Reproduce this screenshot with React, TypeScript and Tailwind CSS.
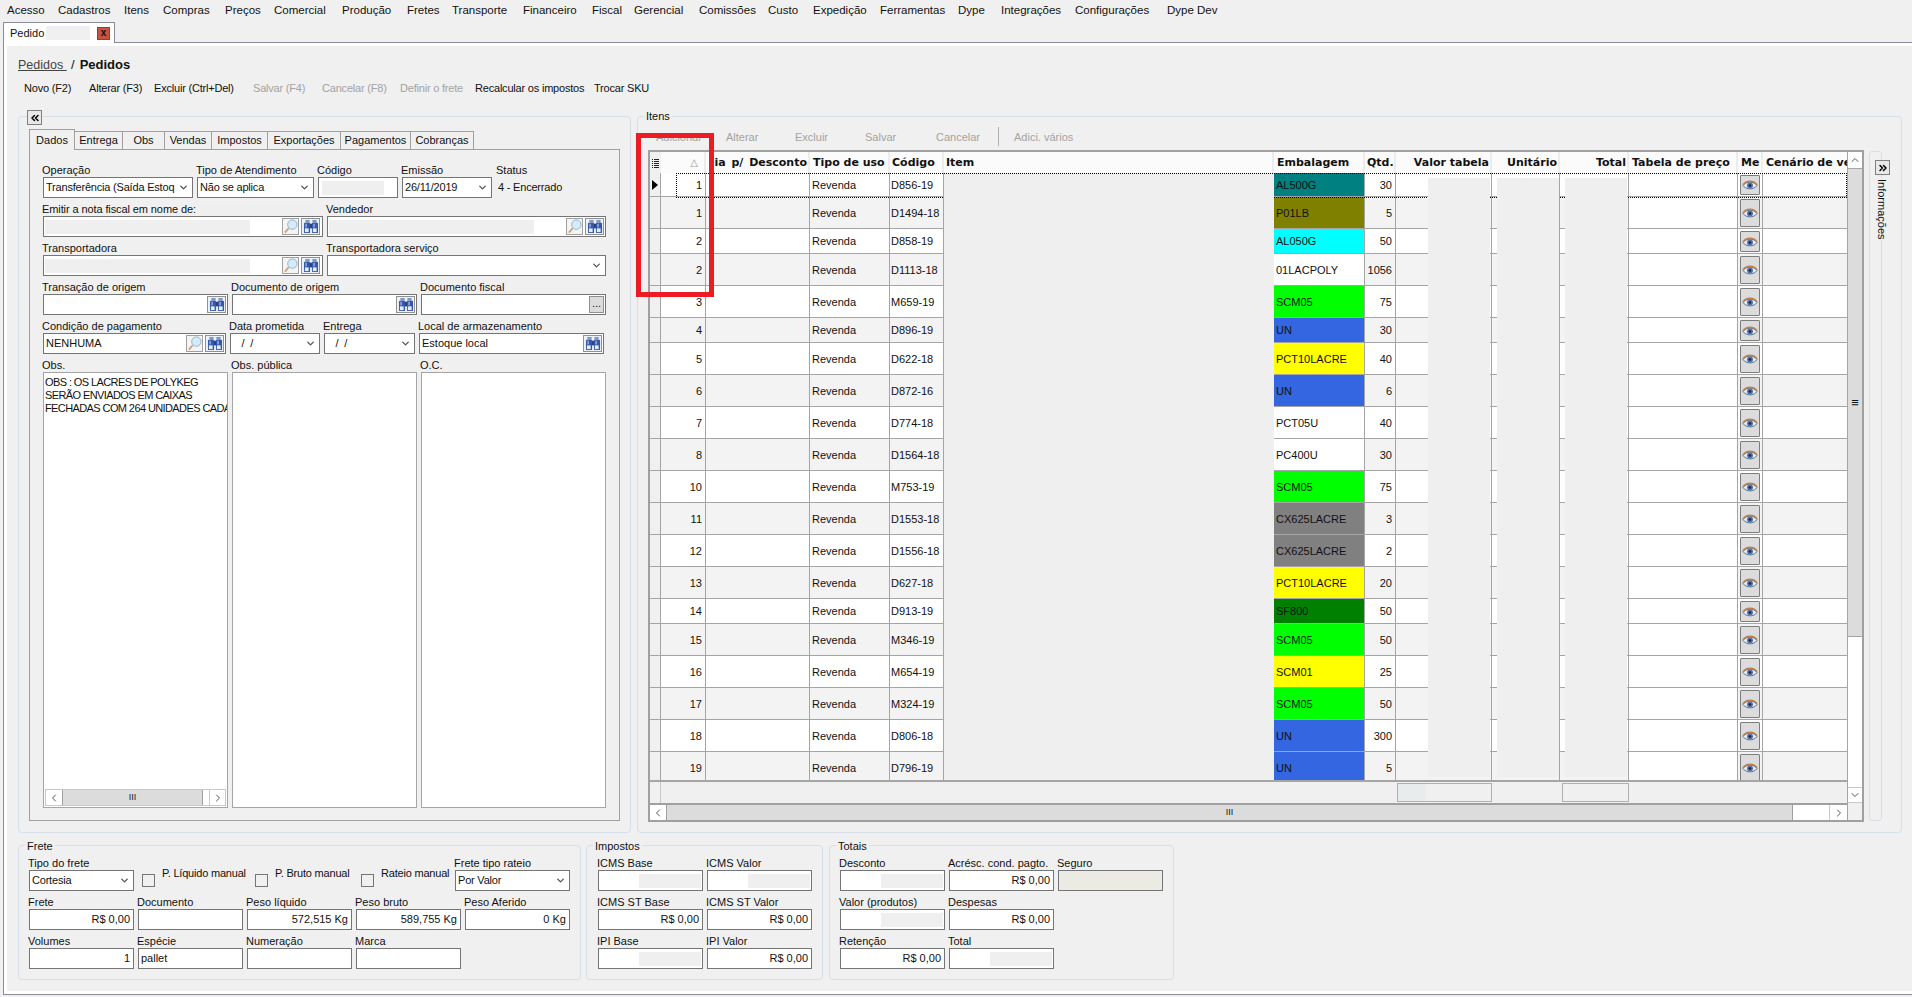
import React from 'react';
import { ChevronDown, ChevronLeft, ChevronRight, ChevronUp, ChevronsLeft, ChevronsRight } from 'lucide-react';

const menu = [
  { t: 'Acesso', w: 'w-[51px]' }, { t: 'Cadastros', w: 'w-[66px]' }, { t: 'Itens', w: 'w-[39px]' },
  { t: 'Compras', w: 'w-[62px]' }, { t: 'Preços', w: 'w-[49px]' }, { t: 'Comercial', w: 'w-[68px]' },
  { t: 'Produção', w: 'w-[65px]' }, { t: 'Fretes', w: 'w-[45px]' }, { t: 'Transporte', w: 'w-[71px]' },
  { t: 'Financeiro', w: 'w-[69px]' }, { t: 'Fiscal', w: 'w-[42px]' }, { t: 'Gerencial', w: 'w-[65px]' },
  { t: 'Comissões', w: 'w-[69px]' }, { t: 'Custo', w: 'w-[45px]' }, { t: 'Expedição', w: 'w-[67px]' },
  { t: 'Ferramentas', w: 'w-[78px]' }, { t: 'Dype', w: 'w-[43px]' }, { t: 'Integrações', w: 'w-[74px]' },
  { t: 'Configurações', w: 'w-[92px]' }, { t: 'Dype Dev', w: 'w-[70px]' },
];

const actions = [
  { t: 'Novo (F2)', w: 'w-[65px]', off: false }, { t: 'Alterar (F3)', w: 'w-[65px]', off: false },
  { t: 'Excluir (Ctrl+Del)', w: 'w-[99px]', off: false }, { t: 'Salvar (F4)', w: 'w-[69px]', off: true },
  { t: 'Cancelar (F8)', w: 'w-[78px]', off: true }, { t: 'Definir o frete', w: 'w-[75px]', off: true },
  { t: 'Recalcular os impostos', w: 'w-[119px]', off: false }, { t: 'Trocar SKU', w: 'w-[70px]', off: false },
];

const tabs = [
  { t: 'Entrega', w: 'w-[48px]' }, { t: 'Obs', w: 'w-[42px]' }, { t: 'Vendas', w: 'w-[47px]' },
  { t: 'Impostos', w: 'w-[56px]' }, { t: 'Exportações', w: 'w-[73px]' }, { t: 'Pagamentos', w: 'w-[70px]' },
  { t: 'Cobranças', w: 'w-[63px]' },
];

const teal = 'bg-[#008080]', olive = 'bg-[#808000]', cyan = 'bg-[#00ffff]', lime = 'bg-[#00ff00]';
const blue = 'bg-[#3366e0]', yellow = 'bg-[#ffff00]', gray = 'bg-[#808080]', green = 'bg-[#008000]';

const rows = [
  { n: '1', c: 'D856-19', e: 'AL500G', bg: teal, q: '30', h: 'h-[24px]' },
  { n: '1', c: 'D1494-18', e: 'P01LB', bg: olive, q: '5', h: 'h-[32px]' },
  { n: '2', c: 'D858-19', e: 'AL050G', bg: cyan, q: '50', h: 'h-[25px]' },
  { n: '2', c: 'D1113-18', e: '01LACPOLY', bg: 'bg-white', q: '1056', h: 'h-[32px]' },
  { n: '3', c: 'M659-19', e: 'SCM05', bg: lime, q: '75', h: 'h-[32px]' },
  { n: '4', c: 'D896-19', e: 'UN', bg: blue, q: '30', h: 'h-[25px]' },
  { n: '5', c: 'D622-18', e: 'PCT10LACRE', bg: yellow, q: '40', h: 'h-[32px]' },
  { n: '6', c: 'D872-16', e: 'UN', bg: blue, q: '6', h: 'h-[32px]' },
  { n: '7', c: 'D774-18', e: 'PCT05U', bg: 'bg-white', q: '40', h: 'h-[32px]' },
  { n: '8', c: 'D1564-18', e: 'PC400U', bg: 'bg-white', q: '30', h: 'h-[32px]' },
  { n: '10', c: 'M753-19', e: 'SCM05', bg: lime, q: '75', h: 'h-[32px]' },
  { n: '11', c: 'D1553-18', e: 'CX625LACRE', bg: gray, q: '3', h: 'h-[32px]' },
  { n: '12', c: 'D1556-18', e: 'CX625LACRE', bg: gray, q: '2', h: 'h-[32px]' },
  { n: '13', c: 'D627-18', e: 'PCT10LACRE', bg: yellow, q: '20', h: 'h-[32px]' },
  { n: '14', c: 'D913-19', e: 'SF800', bg: green, q: '50', h: 'h-[25px]' },
  { n: '15', c: 'M346-19', e: 'SCM05', bg: lime, q: '50', h: 'h-[32px]' },
  { n: '16', c: 'M654-19', e: 'SCM01', bg: yellow, q: '25', h: 'h-[32px]' },
  { n: '17', c: 'M324-19', e: 'SCM05', bg: lime, q: '50', h: 'h-[32px]' },
  { n: '18', c: 'D806-18', e: 'UN', bg: blue, q: '300', h: 'h-[32px]' },
  { n: '19', c: 'D796-19', e: 'UN', bg: blue, q: '5', h: 'h-[32px]' },
];

const columns = 'grid grid-cols-[11px_45px_104px_80px_54px_330px_91px_31px_96px_68px_69px_109px_25px_84px]';

const Binoculars = () => (
  <svg viewBox="0 0 16 16" className="w-[16px] h-[15px]">
    <rect x="2" y="1" width="4.5" height="3" fill="#7f97c9" />
    <rect x="9.5" y="1" width="4.5" height="3" fill="#7f97c9" />
    <rect x="0.5" y="4" width="6.5" height="11" rx="1" fill="#3557a8" />
    <rect x="9" y="4" width="6.5" height="11" rx="1" fill="#3557a8" />
    <rect x="7" y="5" width="2" height="5" fill="#22367c" />
    <rect x="2" y="5" width="1.5" height="4" fill="#9db4e0" />
    <rect x="10.5" y="5" width="1.5" height="4" fill="#9db4e0" />
    <rect x="1.5" y="10" width="4" height="4" fill="#e4edfb" />
    <rect x="10" y="10" width="4" height="4" fill="#e4edfb" />
  </svg>
);

const Magnifier = () => (
  <svg viewBox="0 0 16 16" className="w-[15px] h-[15px]">
    <line x1="6" y1="10" x2="2" y2="14.5" stroke="#c9a47c" strokeWidth="2" />
    <circle cx="10" cy="6" r="5" fill="#d6ebf8" stroke="#8fb0cc" />
  </svg>
);

const Eye = () => (
  <svg viewBox="0 0 16 12" className="w-[16px] h-[12px]">
    <path d="M1 6.5C4 2 12 2 15 6.5C12 11 4 11 1 6.5Z" fill="#e6ecf5" stroke="#5f759c" />
    <path d="M1 6C4 1 12 1 15 6" fill="none" stroke="#c07f4f" strokeWidth="1.5" />
    <circle cx="8" cy="6.5" r="3" fill="#5573a8" />
    <circle cx="8" cy="6.5" r="1.3" fill="#17264a" />
  </svg>
);

const BinButton = () => (
  <span className="w-[19px] h-[17px] shrink-0 flex items-center justify-center border border-[#909090] bg-[#eef1f5]">
    <Binoculars />
  </span>
);

const SearchButton = () => (
  <span className="w-[17px] h-[17px] shrink-0 flex items-center justify-center border border-[#a0a0a0] bg-[#f4f4f4]">
    <Magnifier />
  </span>
);

const Label = ({ children }: { children: React.ReactNode }) => (
  <span className="block h-[14px] leading-[14px] -ml-px whitespace-nowrap">{children}</span>
);

const Box = ({ children, className = 'bg-white' }: { children?: React.ReactNode; className?: string }) => (
  <div className={`h-[21px] border border-[#757575] flex items-center overflow-hidden whitespace-nowrap ${className}`}>
    {children}
  </div>
);

const Field = ({ label, w, children, box }: { label: string; w: string; children?: React.ReactNode; box?: string }) => (
  <div className={`shrink-0 ${w}`}>
    <Label>{label}</Label>
    <Box className={box}>{children}</Box>
  </div>
);

const Select = ({ label, w, value }: { label: string; w: string; value: string }) => (
  <Field label={label} w={w}>
    <span className="flex-1 pl-[2px] overflow-hidden tracking-[-0.2px]">{value}</span>
    <ChevronDown size={11} strokeWidth={3} className="text-[#555555] mr-[3px] shrink-0" />
  </Field>
);

const Money = ({ label, value }: { label: string; value: string }) => (
  <Field label={label} w="w-[105px]">
    <span className="w-full text-right pr-[3px]">{value}</span>
  </Field>
);

const Masked = ({ label, w = 'w-[105px]' }: { label: string; w?: string }) => (
  <Field label={label} w={w}>
    <span className="ml-[40px] w-[62px] h-[14px] bg-[#efefef]" />
  </Field>
);

const Group = ({ legend, w, children }: { legend: string; w: string; children: React.ReactNode }) => (
  <div className={`relative h-[135px] rounded-[4px] border border-[#d5dfe7] ${w}`}>
    <span className="absolute left-[6px] -top-[7px] px-[2px] leading-[14px] bg-[#f0f0f0]">{legend}</span>
    {children}
  </div>
);

const Check = ({ label, w }: { label: string; w: string }) => (
  <div className={`flex shrink-0 ${w}`}>
    <span className="mt-[18px] w-[13px] h-[13px] border border-[#757575]" />
    <span className="mt-[10px] ml-[7px] leading-[14px] whitespace-nowrap tracking-[-0.2px]">{label}</span>
  </div>
);

const noDate = '\u00a0\u00a0\u00a0/\u00a0\u00a0/';

export default function App() {
  return (
    <div className="w-[1912px] h-[997px] overflow-hidden flex flex-col bg-[#f0f0f0] text-[11px] text-[#111111] font-['Liberation_Sans',Arial,sans-serif]">
      {/* menu */}
      <div className="h-[22px] flex pl-[7px] leading-[20px] text-[11.5px] shrink-0">
        {menu.map(m => (
          <span key={m.t} className={`whitespace-nowrap ${m.w}`}>{m.t}</span>
        ))}
      </div>

      {/* document tabs */}
      <div className="h-[21px] flex shrink-0">
        <div className="ml-[3px] w-[112px] flex items-center bg-white border-t border-x border-[#8a8a98]">
          <span className="ml-[6px] w-[36px]">Pedido</span>
          <span className="w-[44px] h-[14px] bg-[#f0f0f0]" />
          <span className="ml-[7px] w-[13px] h-[13px] flex items-center justify-center bg-[#c5533f] border border-[#7a4a40] font-bold text-[10px] leading-none">x</span>
        </div>
        <div className="flex-1 border-b border-[#8a8a98]" />
      </div>

      {/* page */}
      <div className="ml-[3px] h-[952px] shrink-0 bg-white border-l border-b border-[#8a8a98] pt-[3px] pl-[3px] pb-[3px]">
        <div className="h-full bg-[#f0f0f0] pl-[11px] pt-[11px]">
          <div className="h-[16px] flex items-center whitespace-nowrap">
            <span className="text-[12.5px] underline text-[#444444] w-[52px]">Pedidos&nbsp;</span>
            <span className="text-[13px] ml-[1px]">/</span>
            <span className="text-[13px] font-bold ml-[5px]">Pedidos</span>
          </div>

          <div className="h-[16px] mt-[7px] flex items-center pl-[6px] tracking-[-0.2px]">
            {actions.map(a => (
              <span key={a.t} className={`whitespace-nowrap ${a.w} ${a.off ? 'text-[#a3a3a3]' : ''}`}>{a.t}</span>
            ))}
          </div>

          <div className="mt-[20px] h-[717px] flex gap-[6px]">
            {/* left panel */}
            <div className="relative w-[613px] rounded-[4px] border border-[#d5dfe7] pl-[10px] pt-[12px]">
              <span className="absolute left-[8px] -top-[7px] w-[15px] h-[15px] flex items-center justify-center border border-[#808080] bg-[#e8e8e8]">
                <ChevronsLeft size={12} strokeWidth={3} className="text-black" />
              </span>

              <div className="h-[20px] flex items-end">
                <span className="relative z-10 -mb-px w-[46px] h-[21px] flex items-center justify-center bg-[#f0f0f0] border-t border-x border-[#a0a0a0]">Dados</span>
                {tabs.map(t => (
                  <span key={t.t} className={`h-[18px] flex items-center justify-center border-t border-r border-[#a0a0a0] ${t.w}`}>{t.t}</span>
                ))}
              </div>

              <div className="w-[591px] h-[672px] border border-[#a0a0a0] pl-[13px] pt-[13px] flex flex-col gap-[4px]">
                <div className="flex gap-[4px]">
                  <Select label="Operação" w="w-[150px]" value="Transferência (Saída Estoq" />
                  <Select label="Tipo de Atendimento" w="w-[117px]" value="Não se aplica" />
                  <Field label="Código" w="w-[80px]">
                    <span className="ml-[3px] w-[62px] h-[14px] bg-[#efefef]" />
                  </Field>
                  <Select label="Emissão" w="w-[90px]" value="26/11/2019" />
                  <div className="ml-px">
                    <Label>Status</Label>
                    <span className="block mt-[2px] ml-[1px] tracking-[-0.2px]">4 - Encerrado</span>
                  </div>
                </div>

                <div className="flex gap-[4px]">
                  <div className="w-[280px]">
                    <div className="flex h-[14px] items-center -ml-px whitespace-nowrap tracking-[-0.1px]">
                      Emitir a nota fiscal em nome de:
                      <span className="ml-[4px] w-[114px] h-[12px] bg-[#efefef]" />
                    </div>
                    <Box>
                      <span className="ml-[1px] w-[205px] h-[14px] bg-[#efefef]" />
                      <span className="ml-auto flex gap-[2px] pr-[2px]"><SearchButton /><BinButton /></span>
                    </Box>
                  </div>
                  <Field label="Vendedor" w="w-[279px]">
                    <span className="ml-[1px] w-[205px] h-[14px] bg-[#efefef]" />
                    <span className="ml-auto flex gap-[2px] pr-[1px]"><SearchButton /><BinButton /></span>
                  </Field>
                </div>

                <div className="flex gap-[4px]">
                  <Field label="Transportadora" w="w-[280px]">
                    <span className="ml-[1px] w-[205px] h-[14px] bg-[#efefef]" />
                    <span className="ml-auto flex gap-[2px] pr-[2px]"><SearchButton /><BinButton /></span>
                  </Field>
                  <Select label="Transportadora serviço" w="w-[279px]" value="" />
                </div>

                <div className="flex gap-[4px]">
                  <Field label="Transação de origem" w="w-[185px]">
                    <span className="ml-auto pr-[1px]"><BinButton /></span>
                  </Field>
                  <Field label="Documento de origem" w="w-[185px]">
                    <span className="ml-auto pr-[1px]"><BinButton /></span>
                  </Field>
                  <Field label="Documento fiscal" w="w-[185px]">
                    <span className="ml-auto mr-[1px] w-[15px] h-[17px] flex items-center justify-center border border-[#909090] bg-[#dcdcdc] leading-none pb-[3px]">...</span>
                  </Field>
                </div>

                <div className="flex gap-[4px]">
                  <Field label="Condição de pagamento" w="w-[183px]">
                    <span className="pl-[2px]">NENHUMA</span>
                    <span className="ml-auto flex gap-[2px] pr-[1px]"><SearchButton /><BinButton /></span>
                  </Field>
                  <Select label="Data prometida" w="w-[90px]" value={noDate} />
                  <Select label="Entrega" w="w-[91px]" value={noDate} />
                  <Field label="Local de armazenamento" w="w-[185px]">
                    <span className="pl-[2px]">Estoque local</span>
                    <span className="ml-auto pr-[1px]"><BinButton /></span>
                  </Field>
                </div>

                <div className="flex gap-[4px]">
                  <div className="w-[185px]">
                    <Label>Obs.</Label>
                    <div className="h-[436px] bg-white border border-[#a5a5a5] flex flex-col overflow-hidden">
                      <div className="flex-1 pl-[1px] pt-[3px] leading-[13px] whitespace-nowrap overflow-hidden tracking-[-0.6px]">
                        <div>OBS : OS LACRES DE POLYKEG</div>
                        <div>SERÃO ENVIADOS EM CAIXAS</div>
                        <div>FECHADAS COM 264 UNIDADES CADA</div>
                      </div>
                      <div className="h-[17px] mx-[1px] mb-[1px] flex border border-[#c8c8c8]">
                        <span className="w-[16px] flex items-center justify-center"><ChevronLeft size={12} className="text-[#555555]" /></span>
                        <span className="w-[141px] flex items-center justify-center bg-[#dcdcdc] border-x border-[#a0a0a0] text-[9px]">III</span>
                        <span className="w-[6px]" />
                        <span className="flex-1 flex items-center justify-center border-l border-[#c8c8c8]"><ChevronRight size={12} className="text-[#555555]" /></span>
                      </div>
                    </div>
                  </div>
                  <div className="w-[185px]">
                    <Label>Obs. pública</Label>
                    <div className="h-[436px] bg-white border border-[#a5a5a5]" />
                  </div>
                  <div className="w-[185px]">
                    <Label>O.C.</Label>
                    <div className="h-[436px] bg-white border border-[#a5a5a5]" />
                  </div>
                </div>
              </div>
            </div>

            {/* items panel */}
            <div className="relative w-[1265px] rounded-[4px] border border-[#d5dfe7] pl-[10px] pt-[10px]">
              <span className="absolute left-[6px] -top-[8px] px-[2px] leading-[14px] bg-[#f0f0f0]">Itens</span>

              <div className="h-[19px] mb-[4px] flex items-center pl-[8px] text-[#a3a3a3]">
                <span className="w-[70px] mt-[2px]">Adicionar</span>
                <span className="w-[69px] mt-[2px]">Alterar</span>
                <span className="w-[70px] mt-[2px]">Excluir</span>
                <span className="w-[71px] mt-[2px]">Salvar</span>
                <span className="w-[62px] mt-[2px]">Cancelar</span>
                <span className="w-px h-[19px] bg-[#b0b0b0]" />
                <span className="ml-[15px] mt-[2px]">Adici. vários</span>
              </div>

              <div className="flex">
                <div className="relative w-[1216px] h-[672px] border-2 border-[#a0a0a0] flex bg-[#f0f0f0]">
                  <div className="w-[1197px] flex flex-col">
                    <div className={`${columns} h-[21px] bg-[#fbfbfb] font-bold text-[11px] font-['DejaVu_Sans',sans-serif] leading-[21px] whitespace-nowrap`}>
                      <span className="flex items-center justify-center bg-[#f0f0f0]">
                        <svg viewBox="0 0 7 10" className="w-[7px] h-[10px]">
                          <path d="M0 1.5H1M0 3.5H1M0 5.5H1M0 7.5H1M0 9.5H1M2 1.5H7M2 3.5H7M2 5.5H7M2 7.5H7M2 9.5H7" stroke="#222222" />
                        </svg>
                      </span>
                      <span className="flex items-center justify-end pr-[6px] border-r-2 border-[#ececec] font-normal text-[#999999] text-[10px]">△</span>
                      <span className="text-right pr-[1px] border-r-2 border-[#ececec] overflow-hidden [word-spacing:2px]">ia p/ Desconto</span>
                      <span className="pl-[3px] border-r-2 border-[#ececec] overflow-hidden">Tipo de uso</span>
                      <span className="pl-[2px] border-r-2 border-[#ececec] overflow-hidden">Código</span>
                      <span className="pl-[2px] border-r-2 border-[#ececec]">Item</span>
                      <span className="pl-[3px] border-r-2 border-[#ececec] overflow-hidden">Embalagem</span>
                      <span className="pl-[2px] border-r-2 border-[#ececec] overflow-hidden">Qtd.</span>
                      <span className="text-right pr-[1px] border-r-2 border-[#ececec] overflow-hidden">Valor tabela</span>
                      <span className="text-right pr-[1px] border-r-2 border-[#ececec] overflow-hidden">Unitário</span>
                      <span className="text-right pr-[1px] border-r-2 border-[#ececec] overflow-hidden">Total</span>
                      <span className="pl-[3px] border-r-2 border-[#ececec] overflow-hidden">Tabela de preço</span>
                      <span className="pl-[3px] border-r-2 border-[#ececec] overflow-hidden">Me</span>
                      <span className="pl-[3px] overflow-hidden">Cenário de venda</span>
                    </div>

                    <div className="relative h-[607px] overflow-hidden">
                      {rows.map((r, i) => {
                        const stripe = i % 2 === 0 ? 'bg-white' : 'bg-[#f3f3f3]';
                        const cell = `flex items-center border-r border-b border-[#a5a5a5] overflow-hidden whitespace-nowrap ${stripe}`;
                        return (
                          <div key={i} className={`${columns} ${r.h}`}>
                            <span className="flex items-center justify-center border-r border-b border-[#a5a5a5] bg-[#f0f0f0]">
                              {i === 0 && <span className="w-0 h-0 border-y-[5px] border-y-transparent border-l-[6px] border-l-black" />}
                            </span>
                            <span className={`${cell} justify-end pr-[3px] pt-px`}>{r.n}</span>
                            <span className={cell} />
                            <span className={`${cell} pl-[2px] pt-px`}>Revenda</span>
                            <span className={`${cell} pl-[1px] pt-px`}>{r.c}</span>
                            <span className="bg-[#efefef]" />
                            <span className={`flex items-center pl-[2px] pt-px border-r border-b border-[#a5a5a5] whitespace-nowrap ${r.bg}`}>{r.e}</span>
                            <span className={`${cell} justify-end pr-[3px] pt-px`}>{r.q}</span>
                            <span className={cell} />
                            <span className={cell} />
                            <span className={cell} />
                            <span className="border-r border-b border-[#a5a5a5] bg-white" />
                            <span className={`${cell} px-[2px] pb-[1px] pt-[2px]`}>
                              <span className="w-[20px] h-full flex items-center justify-center rounded-[1px] border border-[#7d7d7d] bg-[#dcdcdc]"><Eye /></span>
                            </span>
                            <span className={`flex border-b border-[#a5a5a5] ${stripe}`} />
                          </div>
                        );
                      })}
                      {/* focus rect of the current row, then the masked values over it */}
                      <div className="absolute left-[26px] top-0 w-[1171px] h-[25px] border border-dotted border-black" />
                      <div className="absolute left-[294px] top-[2px] w-[330px] h-[605px] bg-[#efefef]" />
                      <div className="absolute left-[778px] top-[5px] w-[62px] h-[599px] bg-[#efefef]" />
                      <div className="absolute left-[847px] top-[5px] w-[62px] h-[599px] bg-[#efefef]" />
                      <div className="absolute left-[915px] top-[5px] w-[62px] h-[599px] bg-[#efefef]" />
                    </div>

                    <div className="h-[21px] border-t-2 border-[#a5a5a5] box-content flex items-center">
                      <span className="w-[11px] h-full border-r border-[#c8c8c8]" />
                      <span className="ml-[736px] w-[95px] h-[19px] border border-[#b0b0b0] flex">
                        <span className="w-[28px] bg-[#e8ecec]" />
                      </span>
                      <span className="ml-[70px] w-[67px] h-[19px] border border-[#b0b0b0]" />
                    </div>

                    <div className="h-[15px] box-content border-t-2 border-[#a0a0a0] flex">
                      <span className="w-[16px] flex items-center justify-center bg-white"><ChevronLeft size={12} className="text-[#555555]" /></span>
                      <span className="w-[1127px] flex items-center justify-center bg-[#dcdcdc] border-x border-[#a0a0a0] text-[9px]">III</span>
                      <span className="w-[36px] bg-white" />
                      <span className="flex-1 flex items-center justify-center bg-white border-l border-[#c8c8c8]"><ChevronRight size={12} className="text-[#555555]" /></span>
                    </div>
                  </div>

                  <div className="w-[15px] flex flex-col border-l border-[#a5a5a5]">
                    <span className="h-[16px] flex items-center justify-center bg-white"><ChevronUp size={12} className="text-[#555555]" /></span>
                    <span className="h-[469px] flex items-center justify-center bg-[#dcdcdc] border-y border-[#a5a5a5] text-[13px]">≡</span>
                    <span className="h-[150px] bg-white" />
                    <span className="h-[16px] flex items-center justify-center bg-white border-y border-[#c8c8c8]"><ChevronDown size={12} className="text-[#555555]" /></span>
                  </div>

                  {/* annotation drawn on the screenshot */}
                  <div className="absolute -left-[14px] -top-[19px] w-[78px] h-[164px] border-[5px] border-[#ed1c24]" />
                </div>

                <div className="relative ml-[5px] mt-px w-[13px] h-[670px] rounded-[3px] border border-[#d5dfe7]">
                  <span className="absolute left-[5px] top-[8px] w-[15px] h-[15px] flex items-center justify-center border border-[#808080] bg-[#e8e8e8]">
                    <ChevronsRight size={12} strokeWidth={3} className="text-black" />
                  </span>
                  <span className="absolute left-[4px] top-[26px] w-[16px] h-[62px] flex justify-center bg-[#f0f0f0] [writing-mode:vertical-rl] leading-[16px] whitespace-nowrap">Informações</span>
                </div>
              </div>
            </div>
          </div>

          {/* totals */}
          <div className="mt-[12px] flex">
            <Group legend="Frete" w="w-[563px]">
              <div className="pl-[10px] pt-[10px] flex flex-col gap-[4px]">
                <div className="flex">
                  <Select label="Tipo do frete" w="w-[105px]" value="Cortesia" />
                  <div className="ml-[8px] flex">
                    <Check label="P. Líquido manual" w="w-[113px]" />
                    <Check label="P. Bruto manual" w="w-[106px]" />
                    <Check label="Rateio manual" w="w-[94px]" />
                  </div>
                  <Select label="Frete tipo rateio" w="w-[115px]" value="Por Valor" />
                </div>
                <div className="flex gap-[4px]">
                  <Money label="Frete" value="R$ 0,00" />
                  <Field label="Documento" w="w-[105px]" />
                  <Money label="Peso líquido" value="572,515 Kg" />
                  <Money label="Peso bruto" value="589,755 Kg" />
                  <Money label="Peso Aferido" value="0 Kg" />
                </div>
                <div className="flex gap-[4px]">
                  <Money label="Volumes" value="1" />
                  <Field label="Espécie" w="w-[105px]"><span className="pl-[2px]">pallet</span></Field>
                  <Field label="Numeração" w="w-[105px]" />
                  <Field label="Marca" w="w-[105px]" />
                </div>
              </div>
            </Group>

            <div className="ml-[5px]">
              <Group legend="Impostos" w="w-[237px]">
                <div className="pl-[11px] pt-[10px] grid grid-cols-[105px_105px] gap-x-[4px] gap-y-[4px]">
                  <Masked label="ICMS Base" />
                  <Masked label="ICMS Valor" />
                  <Money label="ICMS ST Base" value="R$ 0,00" />
                  <Money label="ICMS ST Valor" value="R$ 0,00" />
                  <Masked label="IPI Base" />
                  <Money label="IPI Valor" value="R$ 0,00" />
                </div>
              </Group>
            </div>

            <div className="ml-[6px]">
              <Group legend="Totais" w="w-[345px]">
                <div className="pl-[10px] pt-[10px] grid grid-cols-[105px_105px_105px] gap-x-[4px] gap-y-[4px]">
                  <Masked label="Desconto" />
                  <Money label="Acrésc. cond. pagto." value="R$ 0,00" />
                  <Field label="Seguro" w="w-[105px]" box="bg-[#ebebe4]" />
                  <Masked label="Valor (produtos)" />
                  <Money label="Despesas" value="R$ 0,00" />
                  <span />
                  <Money label="Retenção" value="R$ 0,00" />
                  <Masked label="Total" />
                </div>
              </Group>
            </div>
          </div>
        </div>
      </div>
    </div>
  );
}
